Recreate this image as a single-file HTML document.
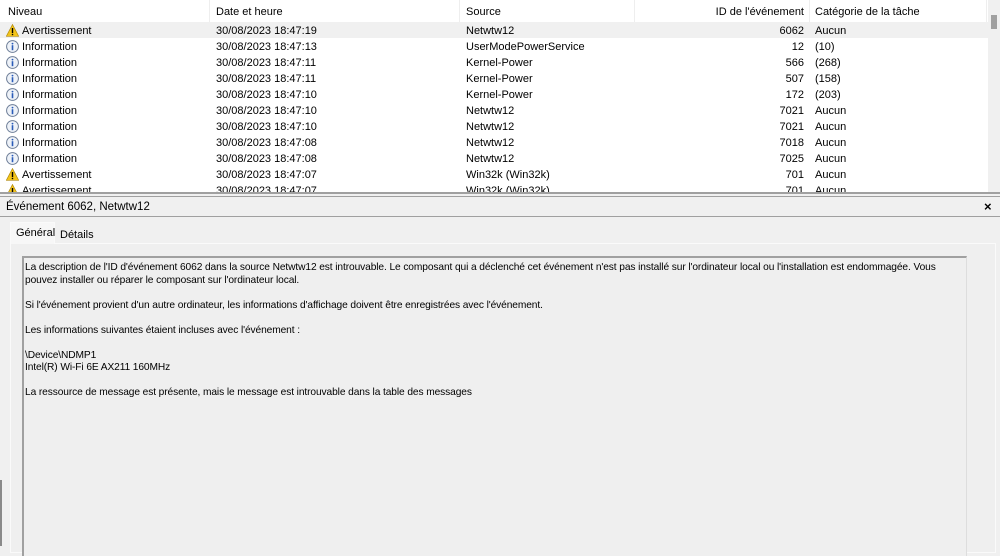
<!DOCTYPE html>
<html><head><style>
*{margin:0;padding:0;box-sizing:border-box}
body{width:1000px;height:546px;overflow:hidden;background:#f0f0f0;font-family:"Liberation Sans",sans-serif;font-size:11px;color:#000;position:relative}
.list{position:absolute;left:0;top:0;width:988px;height:193px;background:#fff;overflow:hidden}
.sb{position:absolute;left:988px;top:0;width:12px;height:193px;background:#f0f0f0}
.sb div{position:absolute;left:3px;top:15px;width:6px;height:14px;background:#a0a0a0}
.row{position:absolute;left:0;height:16px;width:988px;line-height:16px;white-space:nowrap}
.row span{position:absolute;top:1px}
.c1{left:22px}.c2{left:216px}.c3{left:466px}.c4{left:640px;width:164px;text-align:right}.c5{left:815px}
.hdr{top:0;height:22px;line-height:24px}
.hdr span{top:0}
.hdr .sep{position:absolute;top:0;width:1px;height:22px;background:#eee}
.ico{position:absolute;left:6px;top:2px;width:13px;height:13px}
</style></head><body>
<div class="list">
<div class="row hdr"><span style="left:8px">Niveau</span><span class="c2">Date et heure</span><span class="c3">Source</span><span class="c4">ID de l'événement</span><span class="c5">Catégorie de la tâche</span>
<i class="sep" style="left:209px"></i><i class="sep" style="left:459px"></i><i class="sep" style="left:634px"></i><i class="sep" style="left:809px"></i><i class="sep" style="left:986px"></i></div>
<div id="rows"></div>
</div>
<div class="sb"><div></div></div>
<div style="position:absolute;left:0;top:192px;width:1000px;height:2px;background:#a0a0a0"></div>
<div style="position:absolute;left:0;top:196px;width:1000px;height:1px;background:#a0a0a0"></div>
<div style="position:absolute;left:6px;top:201px;font-size:11.5px">Événement 6062, Netwtw12</div>
<div style="position:absolute;left:984px;top:199px;font-size:13px;font-weight:bold">×</div>
<div style="position:absolute;left:0;top:216px;width:1000px;height:1px;background:#a0a0a0"></div>
<div style="position:absolute;left:10px;top:243px;width:986px;height:310px;border:1px solid #fafafa;background:#efefef"></div>
<div style="position:absolute;left:10px;top:222px;width:45px;height:22px;background:#f7f7f7;border:1px solid #fafafa;border-bottom:none"></div>
<div style="position:absolute;left:16px;top:227px">Général</div>
<div style="position:absolute;left:60px;top:229px">Détails</div>
<div style="position:absolute;left:22px;top:256px;width:945px;height:300px;border-top:2px solid #a0a0a0;border-left:2px solid #a0a0a0;border-right:1px solid #ddd;background:#efefef"></div>
<div style="position:absolute;left:25px;top:262px;width:940px;line-height:12.5px;font-size:10.2px;letter-spacing:-0.1px">
La description de l'ID d'événement 6062 dans la source Netwtw12 est introuvable. Le composant qui a déclenché cet événement n'est pas installé sur l'ordinateur local ou l'installation est endommagée. Vous pouvez installer ou réparer le composant sur l'ordinateur local.<br><br>
Si l'événement provient d'un autre ordinateur, les informations d'affichage doivent être enregistrées avec l'événement.<br><br>
Les informations suivantes étaient incluses avec l'événement :<br><br>
\Device\NDMP1<br>Intel(R) Wi-Fi 6E AX211 160MHz<br><br>
La ressource de message est présente, mais le message est introuvable dans la table des messages
</div>
<div style="position:absolute;left:0;top:480px;width:2px;height:66px;background:#8a8a8a"></div>
<script>
var d=[["W","30/08/2023 18:47:19","Netwtw12","6062","Aucun"],["I","30/08/2023 18:47:13","UserModePowerService","12","(10)"],["I","30/08/2023 18:47:11","Kernel-Power","566","(268)"],["I","30/08/2023 18:47:11","Kernel-Power","507","(158)"],["I","30/08/2023 18:47:10","Kernel-Power","172","(203)"],["I","30/08/2023 18:47:10","Netwtw12","7021","Aucun"],["I","30/08/2023 18:47:10","Netwtw12","7021","Aucun"],["I","30/08/2023 18:47:08","Netwtw12","7018","Aucun"],["I","30/08/2023 18:47:08","Netwtw12","7025","Aucun"],["W","30/08/2023 18:47:07","Win32k (Win32k)","701","Aucun"],["W","30/08/2023 18:47:07","Win32k (Win32k)","701","Aucun"]];
var h="";
var W='<svg class="ico" viewBox="0 0 13 13"><path d="M6.5 0.5L12.7 12.3H0.3Z" fill="#f3c41a" stroke="#b08a10" stroke-width="0.7"/><rect x="5.8" y="4" width="1.4" height="5" fill="#000"/><rect x="5.8" y="9.8" width="1.4" height="1.4" fill="#000"/></svg>';
var I='<svg class="ico" viewBox="0 0 13 13"><circle cx="6.5" cy="6.5" r="5.9" fill="#eef2f8" stroke="#6c7c96" stroke-width="1"/><rect x="5.7" y="5.2" width="1.6" height="5" fill="#2a5bb8"/><circle cx="6.5" cy="3.6" r="0.9" fill="#2a5bb8"/></svg>';
d.forEach(function(r,i){h+='<div class="row" style="top:'+(22+i*16)+'px;'+(i==0?'background:#f0f0f0':'')+'">'+(r[0]=="W"?W:I)+'<span class="c1">'+(r[0]=="W"?"Avertissement":"Information")+'</span><span class="c2">'+r[1]+'</span><span class="c3">'+r[2]+'</span><span class="c4">'+r[3]+'</span><span class="c5">'+r[4]+'</span></div>';});
document.getElementById("rows").innerHTML=h;
</script>
</body></html>
